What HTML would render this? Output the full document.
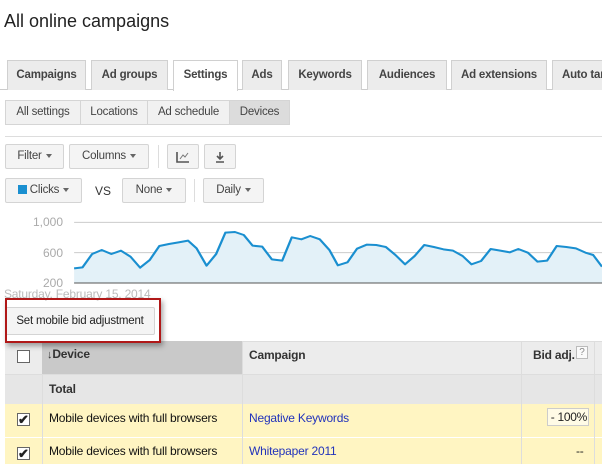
<!DOCTYPE html>
<html><head><meta charset="utf-8"><style>
*{box-sizing:border-box;margin:0;padding:0}
body{width:602px;height:464px;overflow:hidden;background:#fff;font-family:"Liberation Sans",Arial,sans-serif;position:relative;color:#222}
.a{position:absolute}
.tab{position:absolute;top:60px;height:30px;background:#ececec;border:1px solid #d0d0d0;border-bottom:none;font-size:11.5px;font-weight:bold;color:#444;text-align:center;line-height:29px;white-space:nowrap;overflow:hidden;letter-spacing:-0.2px}
.sub{position:absolute;top:100px;height:25px;background:#f1f1f1;border:1px solid #d5d5d5;font-size:11.5px;color:#444;text-align:center;line-height:23px;letter-spacing:-0.2px}
.btn{position:absolute;height:25px;background:#f4f4f4;border:1px solid #d4d4d4;border-radius:2px;font-size:11.5px;color:#444;text-align:center;line-height:23px;white-space:nowrap;letter-spacing:-0.2px}
.tri{display:inline-block;width:0;height:0;border-left:3.5px solid transparent;border-right:3.5px solid transparent;border-top:4px solid #666;vertical-align:middle;margin-left:4px}
.cell{position:absolute;font-size:12px;line-height:16px;white-space:nowrap;letter-spacing:-0.2px}
.cb{position:absolute;width:13px;height:13px;border:1px solid #666;background:#fff}
.lbl{position:absolute;font-size:12px;color:#aaa;text-align:right;width:40px}
</style></head><body>
<div class="a" style="left:4px;top:11px;font-size:18px;color:#222">All online campaigns</div>
<div class="a" style="left:0;top:89px;width:602px;height:1px;background:#ccc"></div>
<div class="tab" style="left:7px;width:79px">Campaigns</div>
<div class="tab" style="left:91px;width:77px">Ad groups</div>
<div class="tab" style="left:173px;width:65px;background:#fff;height:31px">Settings</div>
<div class="tab" style="left:242px;width:40px">Ads</div>
<div class="tab" style="left:288px;width:74px">Keywords</div>
<div class="tab" style="left:367px;width:80px">Audiences</div>
<div class="tab" style="left:451px;width:96px">Ad extensions</div>
<div class="tab" style="left:552px;width:60px;text-align:left;padding-left:9px">Auto targets</div>

<div class="sub" style="left:5px;width:76px">All settings</div>
<div class="sub" style="left:80px;width:68px">Locations</div>
<div class="sub" style="left:147px;width:83px">Ad schedule</div>
<div class="sub" style="left:229px;width:61px;background:#dcdcdc">Devices</div>
<div class="a" style="left:5px;top:136px;width:597px;height:1px;background:#ddd"></div>

<div class="btn" style="left:5px;top:144px;width:59px">Filter<span class="tri"></span></div>
<div class="btn" style="left:69px;top:144px;width:80px">Columns<span class="tri"></span></div>
<div class="a" style="left:158px;top:145px;width:1px;height:23px;background:#ddd"></div>
<div class="btn" style="left:167px;top:144px;width:32px"><svg width="14" height="12" style="margin-top:6px"><path d="M1 1V11H13" stroke="#555" fill="none" stroke-width="1.6"/><path d="M4 8L7 4L9 6L12 2" stroke="#777" fill="none" stroke-width="1"/></svg></div>
<div class="btn" style="left:204px;top:144px;width:32px"><svg width="12" height="12" style="margin-top:6px"><path d="M6 1V8M3 5L6 8L9 5M2 11H10" stroke="#555" fill="none" stroke-width="1.6"/></svg></div>

<div class="btn" style="left:5px;top:178px;width:77px"><span style="display:inline-block;width:9px;height:9px;background:#1a8fd0;vertical-align:-1px;margin-right:3px"></span>Clicks<span class="tri"></span></div>
<div class="a" style="left:95px;top:184px;font-size:12px;color:#333">VS</div>
<div class="btn" style="left:122px;top:178px;width:64px">None<span class="tri"></span></div>
<div class="a" style="left:194px;top:179px;width:1px;height:23px;background:#ddd"></div>
<div class="btn" style="left:203px;top:178px;width:61px">Daily<span class="tri"></span></div>

<div class="lbl" style="left:23px;top:215px">1,000</div>
<div class="lbl" style="left:23px;top:246px">600</div>
<div class="lbl" style="left:23px;top:276px">200</div>
<svg class="a" style="left:0;top:200px" width="602" height="104" viewBox="0 0 1568 312" preserveAspectRatio="none">
<line x1="193" y1="67" x2="1568" y2="67" stroke="#ccc" stroke-width="3"/>
<line x1="193" y1="158" x2="1568" y2="158" stroke="#ccc" stroke-width="3"/>
<polygon fill="#e3f1f8" points="193,205 215,202 240,162 265,150 290,162 315,152 340,170 365,203 390,180 415,138 440,132 465,127 490,122 512,145 538,197 563,162 587,98 612,96 635,105 658,137 683,140 708,178 735,182 760,112 785,118 808,108 833,118 858,150 880,196 905,187 930,146 955,134 980,135 1005,141 1030,165 1055,193 1080,168 1105,135 1130,141 1155,148 1180,152 1205,168 1228,193 1253,183 1278,147 1303,152 1328,157 1350,147 1375,158 1400,185 1425,182 1450,138 1475,141 1500,145 1525,158 1545,165 1568,200 1568,249 193,249"/>
<polyline fill="none" stroke="#1a8fd0" stroke-width="6" stroke-linejoin="round" points="193,205 215,202 240,162 265,150 290,162 315,152 340,170 365,203 390,180 415,138 440,132 465,127 490,122 512,145 538,197 563,162 587,98 612,96 635,105 658,137 683,140 708,178 735,182 760,112 785,118 808,108 833,118 858,150 880,196 905,187 930,146 955,134 980,135 1005,141 1030,165 1055,193 1080,168 1105,135 1130,141 1155,148 1180,152 1205,168 1228,193 1253,183 1278,147 1303,152 1328,157 1350,147 1375,158 1400,185 1425,182 1450,138 1475,141 1500,145 1525,158 1545,165 1568,200"/>
<line x1="193" y1="249" x2="1568" y2="249" stroke="#555" stroke-width="3"/>
</svg>
<div class="a" style="left:4px;top:287px;font-size:12px;color:#bbb;letter-spacing:-0.2px">Saturday, February 15, 2014</div>

<!-- table -->
<div class="a" style="left:5px;top:341px;width:597px;height:33px;background:#ececec;border-top:1px solid #ddd"></div>
<div class="a" style="left:42px;top:341px;width:200px;height:33px;background:#c9c9c9"></div>
<div class="a" style="left:5px;top:374px;width:597px;height:30px;background:#e6e6e6;border-top:1px solid #ddd"></div>
<div class="a" style="left:5px;top:404px;width:597px;height:60px;background:#fff5c2"></div>
<div class="a" style="left:5px;top:437px;width:597px;height:1px;background:#fff"></div>
<div class="a" style="left:42px;top:374px;width:1px;height:90px;background:#ddd"></div>
<div class="a" style="left:242px;top:341px;width:1px;height:123px;background:#ddd"></div>
<div class="a" style="left:521px;top:341px;width:1px;height:123px;background:#ddd"></div>
<div class="a" style="left:594px;top:341px;width:1px;height:123px;background:#ddd"></div>
<div class="cb" style="left:17px;top:350px"></div>
<div class="cell" style="left:47px;top:346px;font-weight:bold;color:#333"><span style="font-size:11px">↓</span>Device</div>
<div class="cell" style="left:249px;top:347px;font-weight:bold;color:#333">Campaign</div>
<div class="cell" style="left:533px;top:347px;font-weight:bold;color:#333">Bid adj.</div>
<div class="a" style="left:576px;top:346px;width:12px;height:13px;border:1px solid #bbb;font-size:10px;color:#888;text-align:center;line-height:11px;background:#fafafa">?</div>
<div class="cell" style="left:49px;top:381px;font-weight:bold;color:#333">Total</div>
<div class="cb" style="left:17px;top:413px;font-size:13px;line-height:11px;text-align:center;font-weight:bold">✔</div>
<div class="cell" style="left:49px;top:410px;color:#111">Mobile devices with full browsers</div>
<div class="cell" style="left:249px;top:410px;color:#2233bb">Negative Keywords</div>
<div class="a" style="left:547px;top:408px;width:42px;height:18px;border:1px solid #ccc;background:#fffbe6;font-size:12px;line-height:16px;text-align:right;padding-right:1px;white-space:nowrap;letter-spacing:-0.3px">- 100%</div>
<div class="cb" style="left:17px;top:447px;font-size:13px;line-height:11px;text-align:center;font-weight:bold">✔</div>
<div class="cell" style="left:49px;top:443px;color:#111">Mobile devices with full browsers</div>
<div class="cell" style="left:249px;top:443px;color:#2233bb">Whitepaper 2011</div>
<div class="cell" style="left:576px;top:443px">--</div>

<div class="btn" style="left:5px;top:307px;width:150px;height:28px;line-height:26px;color:#222;font-size:11.5px">Set mobile bid adjustment</div>
<div class="a" style="left:5px;top:298px;width:156px;height:45px;border:2px solid #b01818;box-shadow:2px 3px 5px rgba(0,0,0,.35)"></div>
</body></html>
